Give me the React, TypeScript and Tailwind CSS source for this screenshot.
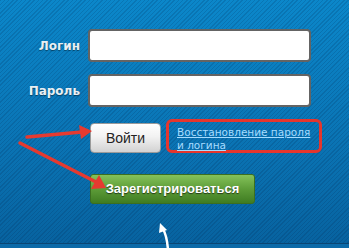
import React from "react";

const App = () => {
  return (
    <div className="relative w-[349px] h-[248px] overflow-hidden bg-[repeating-linear-gradient(135deg,rgba(0,30,70,0.16)_0px,rgba(0,30,70,0.16)_1px,transparent_1px,transparent_3px),linear-gradient(to_bottom,#0b87ca,#0a73b3_60%,#07629f)] font-['DejaVu_Sans',sans-serif]">
      <div className="flex flex-col pt-[29px]">
        {/* Login */}
        <div className="flex items-center">
          <label className="w-[80px] text-right text-[12px] font-bold text-[#e9eff3] [text-shadow:0_1px_1px_rgba(0,0,0,0.45)]">
            Логин
          </label>
          <input className="ml-[8px] w-[223px] h-[33px] bg-white border-2 border-[#646464] rounded-[4px] outline-none" />
        </div>

        {/* Password */}
        <div className="flex items-center mt-[12px]">
          <label className="w-[80px] text-right text-[12px] font-bold text-[#e9eff3] [text-shadow:0_1px_1px_rgba(0,0,0,0.45)]">
            Пароль
          </label>
          <input
            type="password"
            className="ml-[8px] w-[223px] h-[33px] bg-white border-2 border-[#646464] rounded-[4px] outline-none"
          />
        </div>

        {/* Buttons */}
        <div className="flex items-end mt-[12px] ml-[90px]">
          <button className="w-[71px] h-[30px] rounded-[4px] border border-[#9a9a9a] bg-[linear-gradient(to_bottom,#ffffff,#f2f2f2_45%,#d2d2d2)] text-[14px] text-[#222] font-['Liberation_Sans',sans-serif]">
            Войти
          </button>
          <div className="ml-[5px] w-[156px] h-[34px] border-[3px] border-[#e5362d] rounded-[6px] pl-[8px] pt-[3px] leading-[12px]">
            <a className="text-[10.5px] text-[#a6dcff] underline">
              Восстановление пароля и логина
            </a>
          </div>
        </div>

        <button className="mt-[21px] ml-[90px] w-[165px] h-[30px] rounded-[3px] border border-[#3b6e20] bg-[linear-gradient(to_bottom,#84c25a,#5d9c38_50%,#3f7c22)] text-[13px] font-bold text-white font-['Liberation_Sans',sans-serif] [text-shadow:0_1px_1px_rgba(0,0,0,0.6)]">
          Зарегистрироваться
        </button>
      </div>

      {/* bottom edge line */}
      <div className="absolute left-0 right-0 top-[243px] h-[1px] bg-[#0a4674]" />
      <div className="absolute left-0 right-0 top-[244px] h-[4px] bg-[#0c6aa8]" />

      {/* annotation arrows */}
      <svg className="absolute inset-0" width="349" height="248" viewBox="0 0 349 248">
        <line x1="27" y1="137" x2="82" y2="132" stroke="#e53a30" strokeWidth="3.5" strokeLinecap="round" />
        <polygon points="92,131 79,125 81,139" fill="#e53a30" />
        <line x1="20" y1="143" x2="96" y2="182" stroke="#e53a30" strokeWidth="3.5" strokeLinecap="round" />
        <polygon points="106,188 99,175 91,189" fill="#e53a30" />
        <path d="M168 250 Q167 236 163 229" stroke="#ffffff" strokeWidth="2.5" fill="none" />
        <polygon points="160,223 159,233 167,230" fill="#ffffff" />
      </svg>
    </div>
  );
};

export default App;
